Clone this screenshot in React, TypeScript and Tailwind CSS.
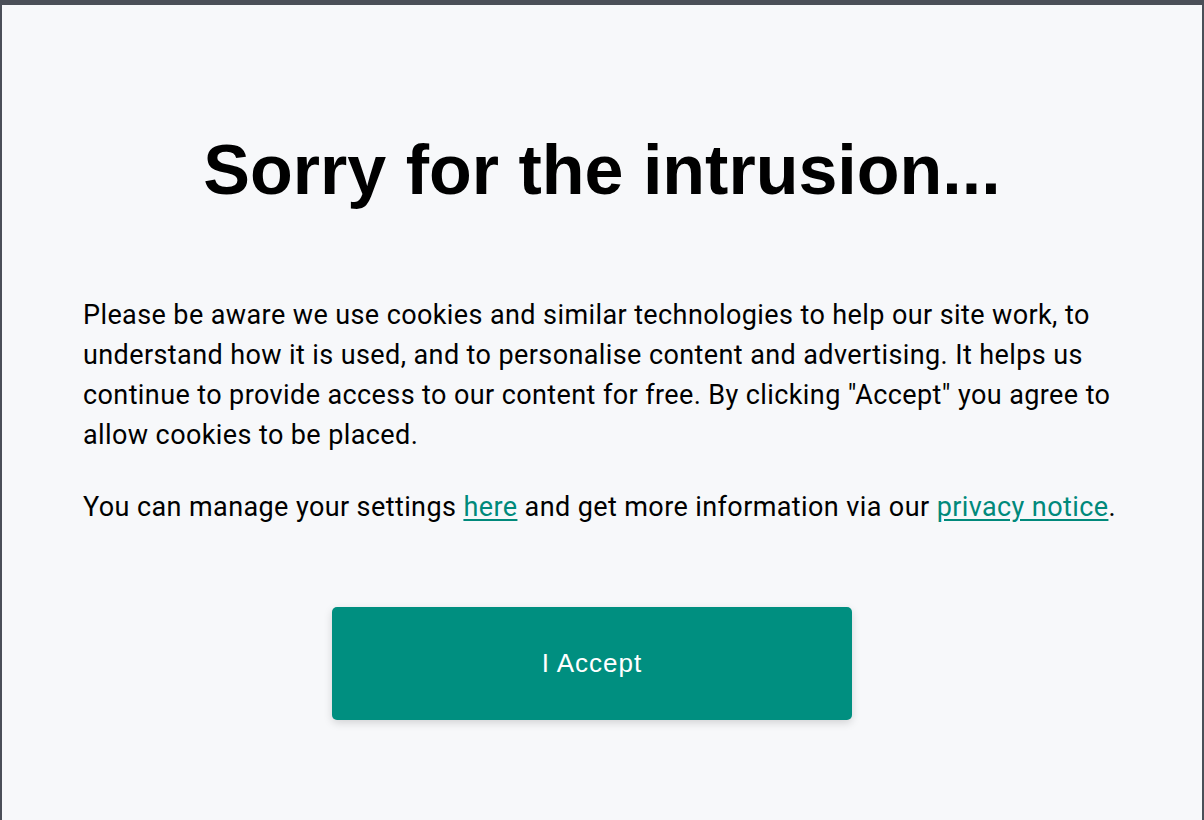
import React from "react";

export default function App() {
    return (
        <div className="w-full h-[820px] bg-[#4b4f58] pt-[5px] px-[2px] overflow-hidden">
            <div className="w-full h-full bg-[#f7f8fa] px-[81px] pt-[123px]">
                <h1 className="text-center text-[70px] leading-[84px] font-bold text-black font-['Liberation_Sans',Arial,sans-serif]">
                    Sorry for the intrusion...
                </h1>
                <div className="mt-[83px] font-['Roboto',sans-serif] text-[27px] leading-[40px] tracking-[0.4px] text-black">
                    <p>
                        Please be aware we use cookies and similar technologies to help our site work, to understand how it is used, and to
                        personalise content and advertising. It helps us continue to provide access to our content for free. By clicking
                        "Accept" you agree to allow cookies to be placed.
                    </p>
                    <p className="mt-[32px]">
                        You can manage your settings{" "}
                        <a href="#" className="text-[#00897b] underline underline-offset-[3px]">
                            here
                        </a>{" "}
                        and get more information via our{" "}
                        <a href="#" className="text-[#00897b] underline underline-offset-[3px]">
                            privacy notice
                        </a>
                        .
                    </p>
                </div>
                <div className="flex justify-center mt-[80px] pr-[20px]">
                    <button className="w-[520px] h-[113px] rounded-[5px] bg-[#008f80] text-white text-[26px] tracking-[1px] font-['Liberation_Sans',Arial,sans-serif] shadow-[0_3px_8px_rgba(0,0,0,0.15)]">
                        I Accept
                    </button>
                </div>
            </div>
        </div>
    );
}
